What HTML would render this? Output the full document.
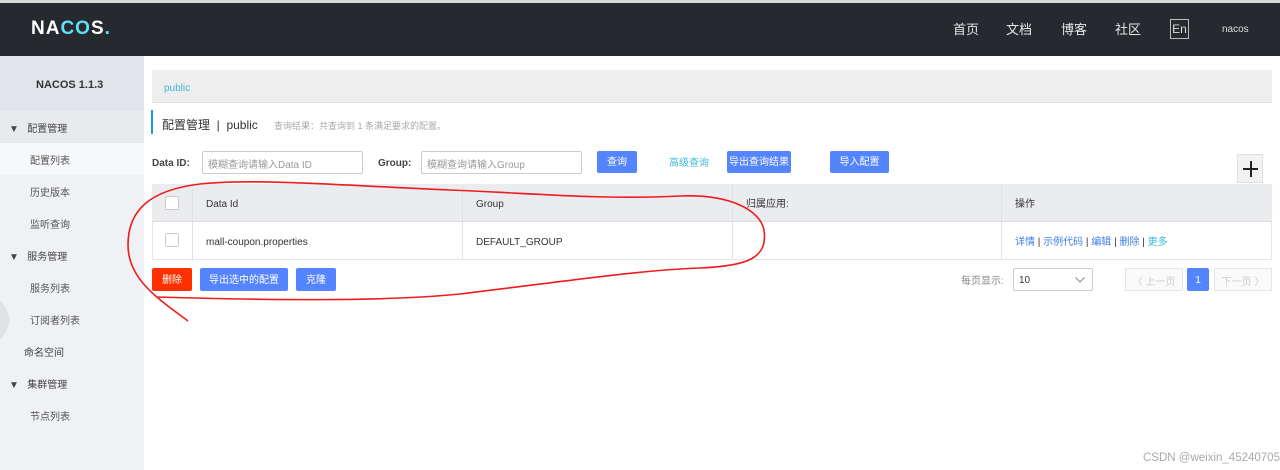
<!DOCTYPE html>
<html><head><meta charset="utf-8"><style>
*{margin:0;padding:0;box-sizing:border-box}
html,body{width:1280px;height:470px;overflow:hidden}
body{background:#fff;font-family:"Liberation Sans","Noto Sans CJK SC",sans-serif;font-size:10px;color:#333;position:relative}
.abs{position:absolute}
.c{display:flex;align-items:center}
.hdr{left:0;top:0;width:1280px;height:56px;background:#262a2f;border-top:3px solid #d8d8d8}
.nav{color:#e6e6e6;font-size:13px;top:22px;line-height:16px}
.side{left:0;top:56px;width:144px;height:414px;background:#eff1f4}
.sitem{position:absolute;font-size:10px;color:#555;line-height:12px;transform:translateY(3px)}
.btn{position:absolute;background:#5584ff;color:#fff;font-size:10px;border-radius:2px;display:flex;align-items:center;justify-content:center;line-height:12px;padding-top:2px}
.inp{position:absolute;border:1px solid #ccc;border-radius:2px;height:23px;color:#999;font-size:10px;padding:2px 5px 0;display:flex;align-items:center}
.cb{position:absolute;width:14px;height:14px;border:1px solid #ccc;border-radius:2px;background:#fff}
.t{position:absolute;font-size:10px;line-height:12px;transform:translateY(2px)}
.link{color:#3d7de8}
</style></head><body>
<div class="abs hdr"></div>
<div class="abs" style="left:31px;top:18px;color:#fff;font-size:19px;font-weight:bold;letter-spacing:1px;line-height:22px">NA<span style="color:#5ce0f5">CO</span>S<span style="color:#5ce0f5">.</span></div>
<div class="abs nav" style="left:953px">首页</div>
<div class="abs nav" style="left:1006px">文档</div>
<div class="abs nav" style="left:1061px">博客</div>
<div class="abs nav" style="left:1115px">社区</div>
<div class="abs" style="left:1170px;top:19px;width:19px;height:20px;border:1px solid #bbb;color:#ddd;font-size:12px;text-align:center;line-height:18px">En</div>
<div class="abs" style="left:1222px;top:24px;color:#ddd;font-size:10px;line-height:12px">nacos</div>

<div class="abs side"></div>
<div class="abs" style="left:0;top:56px;width:144px;height:55px;background:#e1e4e9"></div>
<div class="abs" style="left:0;top:111px;width:144px;height:32px;background:#e8eaee"></div>
<div class="abs" style="left:0;top:143px;width:144px;height:32px;background:#f7f8fa"></div>
<div class="abs" style="left:0;top:300px;width:10px;height:40px;background:#dfe2e6;clip-path:polygon(0 0,60% 20%,100% 50%,60% 80%,0 100%)"></div>
<div class="sitem" style="left:36px;top:76px;font-weight:bold;color:#333;font-size:11px">NACOS 1.1.3</div>
<div class="sitem" style="left:9px;top:121px;color:#444">▼&nbsp;&nbsp;&nbsp;配置管理</div>
<div class="sitem" style="left:30px;top:153px">配置列表</div>
<div class="sitem" style="left:30px;top:185px">历史版本</div>
<div class="sitem" style="left:30px;top:217px">监听查询</div>
<div class="sitem" style="left:9px;top:249px;color:#444">▼&nbsp;&nbsp;&nbsp;服务管理</div>
<div class="sitem" style="left:30px;top:281px">服务列表</div>
<div class="sitem" style="left:30px;top:313px">订阅者列表</div>
<div class="sitem" style="left:24px;top:345px;color:#444">命名空间</div>
<div class="sitem" style="left:9px;top:377px;color:#444">▼&nbsp;&nbsp;&nbsp;集群管理</div>
<div class="sitem" style="left:30px;top:409px">节点列表</div>

<div class="abs" style="left:152px;top:70px;width:1120px;height:33px;background:#eee;border-bottom:1px solid #e2e2e2"></div>
<div class="t" style="left:164px;top:81px;color:#3cb8d8">public</div>
<div class="abs" style="left:151px;top:110px;width:2px;height:24px;background:#1a9ad8"></div>
<div class="t" style="left:162px;top:116px;font-size:12px;line-height:14px;color:#333">配置管理 &nbsp;|&nbsp; public</div>
<div class="t" style="left:274px;top:118px;font-size:9px;color:#aaa">查询结果：共查询到 1 条满足要求的配置。</div>

<div class="t" style="left:152px;top:156px;font-weight:bold;color:#444">Data ID:</div>
<div class="inp" style="left:202px;top:151px;width:161px">模糊查询请输入Data ID</div>
<div class="t" style="left:378px;top:156px;font-weight:bold;color:#444">Group:</div>
<div class="inp" style="left:421px;top:151px;width:161px">模糊查询请输入Group</div>
<div class="btn" style="left:597px;top:151px;width:40px;height:22px">查询</div>
<div class="t" style="left:669px;top:156px;color:#3cb8d8">高级查询</div>
<div class="btn" style="left:727px;top:151px;width:64px;height:22px">导出查询结果</div>
<div class="btn" style="left:830px;top:151px;width:59px;height:22px">导入配置</div>
<div class="abs" style="left:1237px;top:154px;width:26px;height:29px;background:#f2f2f2;border:1px solid #e0e0e0"><div style="position:absolute;left:5px;top:13px;width:15px;height:2px;background:#222"></div><div style="position:absolute;left:11.5px;top:6px;width:2px;height:16px;background:#222"></div></div>

<div class="abs" style="left:152px;top:184px;width:1120px;height:76px;border:1px solid #e6e6e6"></div>
<div class="abs" style="left:152px;top:184px;width:1120px;height:38px;background:#ebecf0;border-bottom:1px solid #ddd"></div>
<div class="abs" style="left:192px;top:184px;width:1px;height:76px;background:#e2e2e2"></div>
<div class="abs" style="left:462px;top:184px;width:1px;height:76px;background:#e2e2e2"></div>
<div class="abs" style="left:732px;top:184px;width:1px;height:76px;background:#e2e2e2"></div>
<div class="abs" style="left:1001px;top:184px;width:1px;height:76px;background:#e2e2e2"></div>
<div class="cb" style="left:165px;top:196px"></div>
<div class="cb" style="left:165px;top:233px"></div>
<div class="t" style="left:206px;top:197px">Data Id</div>
<div class="t" style="left:476px;top:197px">Group</div>
<div class="t" style="left:746px;top:197px">归属应用:</div>
<div class="t" style="left:1015px;top:197px">操作</div>
<div class="t" style="left:206px;top:235px">mall-coupon.properties</div>
<div class="t" style="left:476px;top:235px">DEFAULT_GROUP</div>
<div class="t" style="left:1015px;top:235px"><span class="link">详情</span> | <span class="link">示例代码</span> | <span class="link">编辑</span> | <span class="link">删除</span> | <span style="color:#3cb8d8">更多</span></div>

<div class="btn" style="left:152px;top:268px;width:40px;height:23px;background:#ff3000">删除</div>
<div class="btn" style="left:200px;top:268px;width:88px;height:23px">导出选中的配置</div>
<div class="btn" style="left:296px;top:268px;width:40px;height:23px">克隆</div>

<div class="t" style="left:961px;top:274px;color:#888">每页显示:</div>
<div class="abs c" style="left:1013px;top:268px;width:80px;height:23px;border:1px solid #ccc;border-radius:2px;padding:2px 5px 0;font-size:10px">10<svg style="position:absolute;right:7px;top:8px" width="10" height="6"><path d="M0.5 0.5 L5 5 L9.5 0.5" fill="none" stroke="#888" stroke-width="1"/></svg></div>
<div class="abs c" style="left:1125px;top:268px;width:58px;height:23px;border:1px solid #e6e6e6;background:#fafafa;color:#ccc;font-size:10px;justify-content:center;padding-top:2px">〈 上一页</div>
<div class="btn" style="left:1187px;top:268px;width:22px;height:23px">1</div>
<div class="abs c" style="left:1214px;top:268px;width:58px;height:23px;border:1px solid #e6e6e6;background:#fafafa;color:#ccc;font-size:10px;justify-content:center;padding-top:2px">下一页 〉</div>

<svg class="abs" style="left:0;top:0" width="1280" height="470"><path d="M188 321 C160 300 128 280 128 245 C128 210 150 190 200 184 C260 178 350 186 450 190 C530 193 600 200 680 196 C730 194 760 210 764 230 C768 258 748 266 700 268 C640 270 560 282 460 294 C380 302 260 300 157 297" fill="none" stroke="#ee1c1c" stroke-width="1.6"/></svg>
<div class="abs" style="left:1143px;top:451px;color:#aaa;font-size:11.5px;white-space:nowrap;line-height:14px">CSDN @weixin_45240705</div>
</body></html>
